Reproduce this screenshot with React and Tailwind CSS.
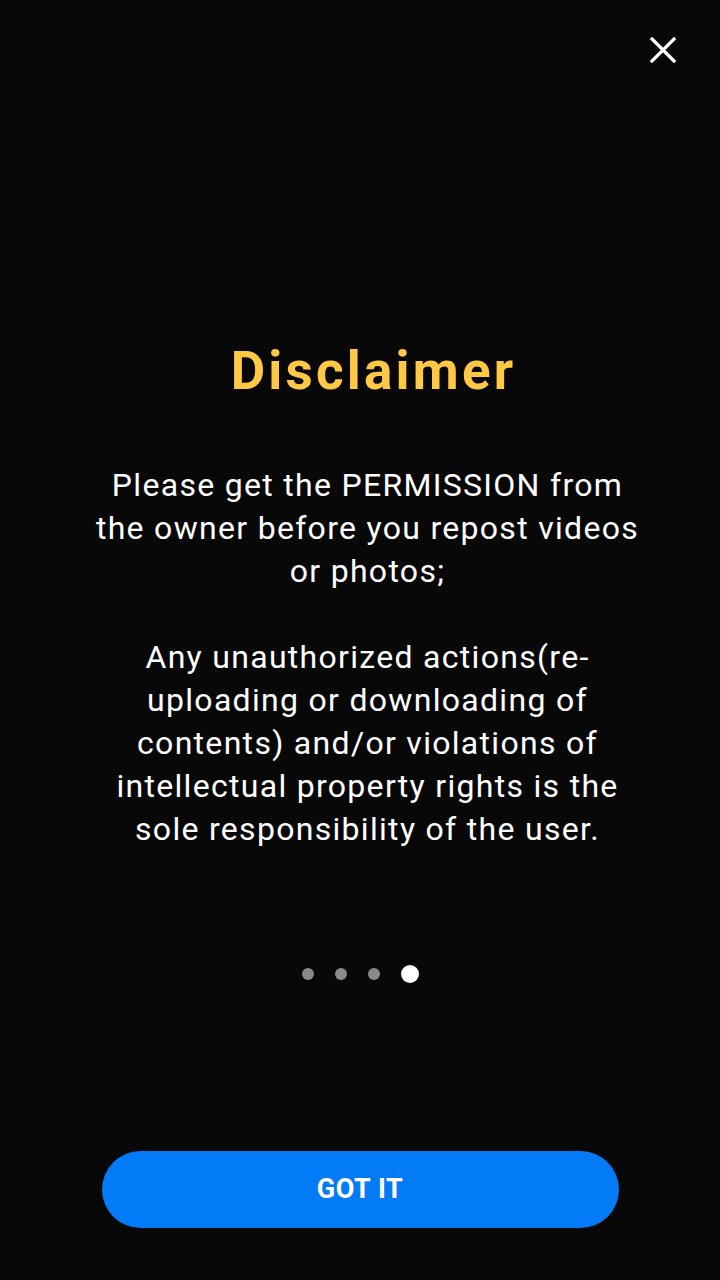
export default function App() {
  return (
    <div className="relative w-[720px] h-[1280px] bg-[#080808] flex flex-col items-center" style={{ fontFamily: "Roboto, 'Noto Sans', sans-serif" }}>
      <button className="absolute right-[43px] top-[36px] w-[28px] h-[28px] flex items-center justify-center">
        <svg width="28" height="28" viewBox="0 0 28 28" fill="none" stroke="#fff" strokeWidth="3.2" strokeLinecap="square">
          <path d="M3 3 L25 25 M25 3 L3 25" />
        </svg>
      </button>
      <h1 className="mt-[337px] pl-[27px] text-[53px] leading-[68px] font-bold text-[#FFC845] tracking-[3.2px]">Disclaimer</h1>
      <div className="mt-[59px] pl-[15px] w-[660px] text-center text-white text-[32px] leading-[43px] tracking-[1.3px]">
        <p>Please get the PERMISSION from<br />the owner before you repost videos<br />or photos;</p>
        <p className="mt-[43px]">Any unauthorized actions(re-<br />uploading or downloading of<br />contents) and/or violations of<br />intellectual property rights is the<br />sole responsibility of the user.</p>
      </div>
      <div className="mt-[114px] flex items-center gap-[21px]">
        <span className="w-[12px] h-[12px] rounded-full bg-[#8a8a8a]"></span>
        <span className="w-[12px] h-[12px] rounded-full bg-[#8a8a8a]"></span>
        <span className="w-[12px] h-[12px] rounded-full bg-[#8a8a8a]"></span>
        <span className="w-[18px] h-[18px] rounded-full bg-white"></span>
      </div>
      <div className="flex-1"></div>
      <button className="mb-[52px] w-[517px] h-[77px] rounded-full bg-[#037BF7] text-white text-[27px] font-bold tracking-[0.6px]">GOT IT</button>
    </div>
  );
}
